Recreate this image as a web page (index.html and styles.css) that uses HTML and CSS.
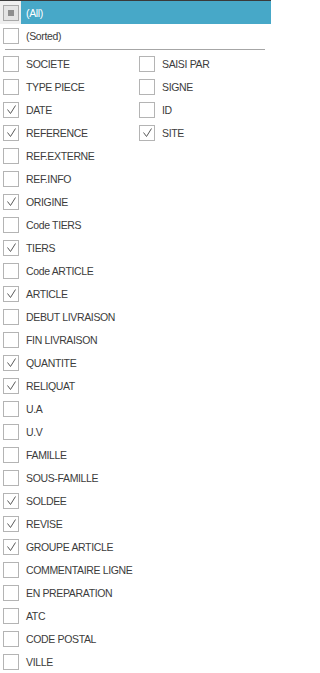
FILE: index.html
```html
<!DOCTYPE html>
<html>
<head>
<meta charset="utf-8">
<link rel="stylesheet" href="styles.css">
</head>
<body>
<div class="panel">
  <div class="row all">
    <div class="boxcell"><span class="cb partial"><span class="dot"></span></span></div>
    <span class="label">(All)</span>
  </div>
  <div class="row">
    <div class="boxcell"><span class="cb"></span></div>
    <span class="label">(Sorted)</span>
  </div>
  <div class="sep"></div>
  <div class="cols">
    <div class="col left" id="left"></div>
    <div class="col right" id="right"></div>
  </div>
</div>
<script src="app.js"></script>
</body>
</html>
```
FILE: styles.css
```css
html, body {
  margin: 0;
  padding: 0;
  background: #ffffff;
}
.panel {
  width: 271px;
  height: 673px;
  overflow: hidden;
  font-family: "Liberation Sans", Arial, sans-serif;
  font-size: 10.5px;
  letter-spacing: -0.35px;
  color: #3c3c3c;
  border-top: 1px solid #3a3a3a;
  box-sizing: border-box;
}
.row {
  display: flex;
  align-items: center;
  height: 23px;
}
.boxcell {
  width: 21px;
  height: 100%;
  display: flex;
  align-items: center;
  padding-left: 3px;
  box-sizing: border-box;
  flex: none;
}
.label {
  padding-left: 5px;
  white-space: nowrap;
}
.all {
  background: #47a8c8;
  color: #ffffff;
}
.all .boxcell {
  background: #efefef;
}
.cb {
  width: 16px;
  height: 16px;
  box-sizing: border-box;
  border: 1px solid #b4b4b4;
  background: #ffffff;
  display: flex;
  align-items: center;
  justify-content: center;
  flex: none;
}
.cb.partial {
  background: #e4e4e4;
  border-color: #a9a9a9;
}
.dot {
  width: 6px;
  height: 6px;
  background: #8e8e8e;
}
.cb svg {
  display: block;
}
.sep {
  height: 1px;
  background: #a6a6a6;
  margin: 2px 6px 2px 5px;
}
.cols {
  display: flex;
  padding-top: 0;
}
.col {
  display: flex;
  flex-direction: column;
}
.col.left {
  width: 136px;
}
.col.right {
  flex: 1;
}
```
FILE: app.js
```js
var left = [
  ["SOCIETE",0],["TYPE PIECE",0],["DATE",1],["REFERENCE",1],["REF.EXTERNE",0],
  ["REF.INFO",0],["ORIGINE",1],["Code TIERS",0],["TIERS",1],["Code ARTICLE",0],
  ["ARTICLE",1],["DEBUT LIVRAISON",0],["FIN LIVRAISON",0],["QUANTITE",1],["RELIQUAT",1],
  ["U.A",0],["U.V",0],["FAMILLE",0],["SOUS-FAMILLE",0],["SOLDEE",1],
  ["REVISE",1],["GROUPE ARTICLE",1],["COMMENTAIRE LIGNE",0],["EN PREPARATION",0],["ATC",0],
  ["CODE POSTAL",0],["VILLE",0]
];
var right = [["SAISI PAR",0],["SIGNE",0],["ID",0],["SITE",1]];
var check = '<svg width="14" height="14" viewBox="0 0 14 14"><polyline points="3.5,6.5 6.5,10.5 11.5,2.5" fill="none" stroke="#5a5a5a" stroke-width="1"/></svg>';
function build(id, items) {
  var el = document.getElementById(id);
  var html = "";
  items.forEach(function (it) {
    html += '<div class="row"><div class="boxcell"><span class="cb">' + (it[1] ? check : "") +
      '</span></div><span class="label">' + it[0] + '</span></div>';
  });
  el.innerHTML = html;
}
build("left", left);
build("right", right);
```
